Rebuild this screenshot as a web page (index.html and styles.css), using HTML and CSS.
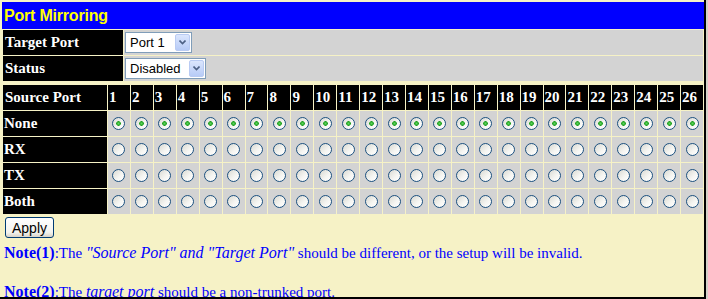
FILE: index.html
```html
<!DOCTYPE html>
<html>
  <head>
    <meta charset="UTF-8" />
    <title>Port Mirroring</title>
    <link rel="stylesheet" href="styles.css">
  </head>
  <body>
    <div class="frame">
      <div class="title">Port Mirroring</div>

      <table class="setup">
        <tr>
          <th>Target Port</th>
          <td>
            <span class="combo">
              <select class="sel-port">
                <option>Port 1</option>
                <option>Port 2</option>
                <option>Port 3</option>
              </select>
              <span class="drop"><svg width="7" height="5" viewBox="0 0 7 5"><path d="M0.5 0.5 L3.5 3.5 L6.5 0.5" fill="none" stroke="#4d6185" stroke-width="1.6"/></svg></span>
            </span>
          </td>
        </tr>
        <tr>
          <th>Status</th>
          <td>
            <span class="combo">
              <select class="sel-status">
                <option>Disabled</option>
                <option>Enabled</option>
              </select>
              <span class="drop"><svg width="7" height="5" viewBox="0 0 7 5"><path d="M0.5 0.5 L3.5 3.5 L6.5 0.5" fill="none" stroke="#4d6185" stroke-width="1.6"/></svg></span>
            </span>
          </td>
        </tr>
      </table>

      <table class="ports">
        <tr>
          <th class="lbl">Source Port</th>
          <th>1</th><th>2</th><th>3</th><th>4</th><th>5</th><th>6</th><th>7</th><th>8</th><th>9</th><th>10</th><th>11</th><th>12</th><th>13</th>
          <th>14</th><th>15</th><th>16</th><th>17</th><th>18</th><th>19</th><th>20</th><th>21</th><th>22</th><th>23</th><th>24</th><th>25</th><th>26</th>
        </tr>
        <tr>
          <th>None</th>
          <td><input type="radio" name="p1" checked></td><td><input type="radio" name="p2" checked></td><td><input type="radio" name="p3" checked></td><td><input type="radio" name="p4" checked></td>
          <td><input type="radio" name="p5" checked></td><td><input type="radio" name="p6" checked></td><td><input type="radio" name="p7" checked></td><td><input type="radio" name="p8" checked></td>
          <td><input type="radio" name="p9" checked></td><td><input type="radio" name="p10" checked></td><td><input type="radio" name="p11" checked></td><td><input type="radio" name="p12" checked></td>
          <td><input type="radio" name="p13" checked></td><td><input type="radio" name="p14" checked></td><td><input type="radio" name="p15" checked></td><td><input type="radio" name="p16" checked></td>
          <td><input type="radio" name="p17" checked></td><td><input type="radio" name="p18" checked></td><td><input type="radio" name="p19" checked></td><td><input type="radio" name="p20" checked></td>
          <td><input type="radio" name="p21" checked></td><td><input type="radio" name="p22" checked></td><td><input type="radio" name="p23" checked></td><td><input type="radio" name="p24" checked></td>
          <td><input type="radio" name="p25" checked></td><td><input type="radio" name="p26" checked></td>
        </tr>
        <tr>
          <th>RX</th>
          <td><input type="radio" name="p1"></td><td><input type="radio" name="p2"></td><td><input type="radio" name="p3"></td><td><input type="radio" name="p4"></td>
          <td><input type="radio" name="p5"></td><td><input type="radio" name="p6"></td><td><input type="radio" name="p7"></td><td><input type="radio" name="p8"></td>
          <td><input type="radio" name="p9"></td><td><input type="radio" name="p10"></td><td><input type="radio" name="p11"></td><td><input type="radio" name="p12"></td>
          <td><input type="radio" name="p13"></td><td><input type="radio" name="p14"></td><td><input type="radio" name="p15"></td><td><input type="radio" name="p16"></td>
          <td><input type="radio" name="p17"></td><td><input type="radio" name="p18"></td><td><input type="radio" name="p19"></td><td><input type="radio" name="p20"></td>
          <td><input type="radio" name="p21"></td><td><input type="radio" name="p22"></td><td><input type="radio" name="p23"></td><td><input type="radio" name="p24"></td>
          <td><input type="radio" name="p25"></td><td><input type="radio" name="p26"></td>
        </tr>
        <tr>
          <th>TX</th>
          <td><input type="radio" name="p1"></td><td><input type="radio" name="p2"></td><td><input type="radio" name="p3"></td><td><input type="radio" name="p4"></td>
          <td><input type="radio" name="p5"></td><td><input type="radio" name="p6"></td><td><input type="radio" name="p7"></td><td><input type="radio" name="p8"></td>
          <td><input type="radio" name="p9"></td><td><input type="radio" name="p10"></td><td><input type="radio" name="p11"></td><td><input type="radio" name="p12"></td>
          <td><input type="radio" name="p13"></td><td><input type="radio" name="p14"></td><td><input type="radio" name="p15"></td><td><input type="radio" name="p16"></td>
          <td><input type="radio" name="p17"></td><td><input type="radio" name="p18"></td><td><input type="radio" name="p19"></td><td><input type="radio" name="p20"></td>
          <td><input type="radio" name="p21"></td><td><input type="radio" name="p22"></td><td><input type="radio" name="p23"></td><td><input type="radio" name="p24"></td>
          <td><input type="radio" name="p25"></td><td><input type="radio" name="p26"></td>
        </tr>
        <tr>
          <th>Both</th>
          <td><input type="radio" name="p1"></td><td><input type="radio" name="p2"></td><td><input type="radio" name="p3"></td><td><input type="radio" name="p4"></td>
          <td><input type="radio" name="p5"></td><td><input type="radio" name="p6"></td><td><input type="radio" name="p7"></td><td><input type="radio" name="p8"></td>
          <td><input type="radio" name="p9"></td><td><input type="radio" name="p10"></td><td><input type="radio" name="p11"></td><td><input type="radio" name="p12"></td>
          <td><input type="radio" name="p13"></td><td><input type="radio" name="p14"></td><td><input type="radio" name="p15"></td><td><input type="radio" name="p16"></td>
          <td><input type="radio" name="p17"></td><td><input type="radio" name="p18"></td><td><input type="radio" name="p19"></td><td><input type="radio" name="p20"></td>
          <td><input type="radio" name="p21"></td><td><input type="radio" name="p22"></td><td><input type="radio" name="p23"></td><td><input type="radio" name="p24"></td>
          <td><input type="radio" name="p25"></td><td><input type="radio" name="p26"></td>
        </tr>
      </table>

      <button class="apply" type="button">Apply</button>

      <p class="note">
        <b>Note(1)</b>:The <i>"Source Port" and "Target Port"</i> should be different, or the setup will be invalid.
        <br /><br />
        <b>Note(2)</b>:The <i>target port</i> should be a non-trunked port.
      </p>
    </div>
  </body>
</html>
```

FILE: styles.css
```css
html, body {
  margin: 0;
}

body {
  background: #d4d0c8;
  font-family: "Liberation Serif", "Times New Roman", serif;
}

.frame {
  width: 706px;
  height: 299px;
  box-sizing: border-box;
  padding: 2px 0 0 2px;
  border-right: 2px solid #000;
  border-bottom: 2px solid #000;
  background-color: #f6f2c6;
  overflow: hidden;
}

.title {
  height: 27px;
  padding-left: 2px;
  background: #00f;
  color: #ff0;
  font: bold 16px "Liberation Sans", Arial, sans-serif;
  line-height: 27px;
  letter-spacing: -0.2px;
}

table {
  width: 702px;
  border-spacing: 1px;
  table-layout: fixed;
}

th {
  height: 25px;
  padding: 0 0 0 2px;
  background: #000;
  color: #fff;
  font: bold 15px "Liberation Serif", "Times New Roman", serif;
  text-align: left;
  white-space: nowrap;
  overflow: hidden;
}

td {
  height: 25px;
  padding: 0;
  background: #d3d3d3;
}

.setup th {
  width: 118px;
}

.ports {
  margin-top: 2px;
}

.ports th {
  padding-left: 1px;
}

.ports th.lbl {
  width: 102px;
  padding-left: 2px;
}

.ports td input {
  display: block;
  appearance: none;
  -webkit-appearance: none;
  width: 13px;
  height: 13px;
  margin: 0 auto;
  box-sizing: border-box;
  border: 1px solid #1c5180;
  border-radius: 50%;
  background: linear-gradient(135deg, #d9d9d2, #f6f6f3 60%, #fff);
}

.ports td input:checked {
  background: radial-gradient(circle, #5fd65f 0, #21a121 2px, transparent 2.6px), linear-gradient(135deg, #d9d9d2, #f6f6f3 60%, #fff);
}

.combo {
  display: inline-flex;
  align-items: center;
  height: 21px;
  margin-left: 1px;
  box-sizing: border-box;
  border: 1px solid #7f9db9;
  background: #fff;
  vertical-align: middle;
}

.combo select {
  appearance: none;
  -webkit-appearance: none;
  border: none;
  background: transparent;
  padding: 0 0 0 4px;
  margin: 0;
  font: 13px "Liberation Sans", Arial, sans-serif;
  color: #000;
  outline: none;
}

.sel-port {
  width: 49px;
}

.sel-status {
  width: 63px;
}

.drop {
  display: flex;
  align-items: center;
  justify-content: center;
  width: 15px;
  height: 17px;
  margin-right: 1px;
  box-sizing: border-box;
  border: 1px solid #b9cbf3;
  border-radius: 2px;
  background: linear-gradient(#dbe6fd, #b7cbf7);
}

.apply {
  display: block;
  width: 49px;
  height: 21px;
  margin: 2px 0 0 3px;
  padding: 0;
  border: 1px solid #003c74;
  border-radius: 3px;
  background: linear-gradient(#fff, #f3f3ee 75%, #d8d3c8);
  color: #000;
  font: 14px "Liberation Sans", Arial, sans-serif;
}

.note {
  margin: 5px 0 0 2px;
  line-height: 19px;
  color: #00f;
  font-size: 15px;
}

.note b,
.note i {
  font-size: 16px;
}
```
